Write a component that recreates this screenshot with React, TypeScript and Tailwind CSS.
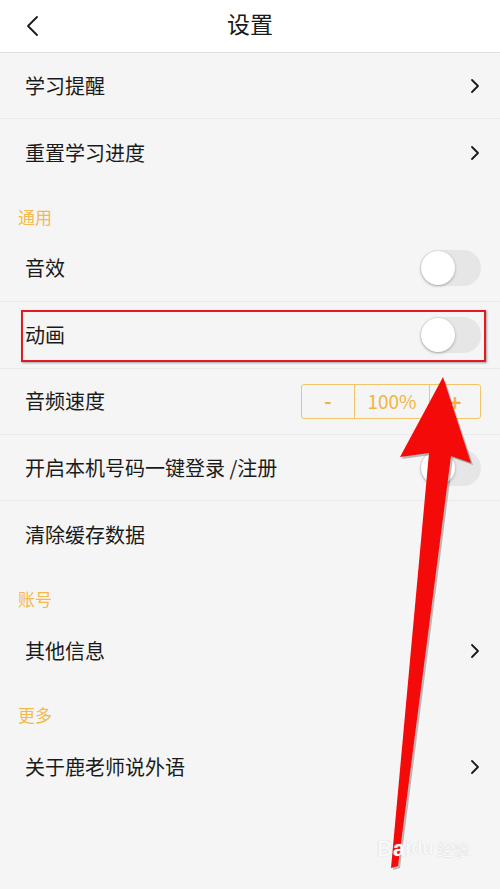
import { ReactNode } from "react";

const FONT = { fontFamily: '"Noto Sans CJK SC", "Noto Sans", sans-serif' };

function Chevron() {
  return (
    <svg width="12" height="18" viewBox="0 0 12 18" fill="none">
      <path d="M3 3l6 6-6 6" stroke="#1a1a1a" strokeWidth="1.8" strokeLinecap="round" strokeLinejoin="round" />
    </svg>
  );
}

function Toggle() {
  return (
    <div className="relative h-[36px] w-[61px] rounded-full bg-[#e6e6e6]">
      <div className="absolute left-[1px] top-[1px] h-[34px] w-[34px] rounded-full bg-white shadow-[0_1px_3px_rgba(0,0,0,0.3)]" />
    </div>
  );
}

function Stepper() {
  return (
    <div className="flex h-[35px] w-[180px] rounded-[3px] border border-[#f3c46a] text-[#f2b440]">
      <div className="flex w-[53px] items-center justify-center border-r border-[#f3c46a] text-[20px] font-bold">-</div>
      <div className="flex w-[75px] items-center justify-center border-r border-[#f3c46a] text-[19px]">100%</div>
      <div className="flex flex-1 items-center justify-center text-[22px] font-bold">+</div>
    </div>
  );
}

function Row({ label, right, last, children }: { label: string; right?: ReactNode; last?: boolean; children?: ReactNode }) {
  return (
    <div className={`relative flex h-[66.4px] items-center justify-between pl-[25px] pr-[19px] ${last ? "" : "border-b border-[#e9e9e9]"}`}>
      <span className="text-[20px] text-[#1a1a1a]">{label}</span>
      {right}
      {children}
    </div>
  );
}

function Section({ title }: { title: string }) {
  return (
    <div className="flex h-[50px] items-end pb-[9px] pl-[18px] text-[17px] leading-[20px] text-[#f4b94a]">{title}</div>
  );
}

export default function App() {
  return (
    <div className="relative h-[889px] w-[500px] overflow-hidden bg-[#f5f5f5]" style={FONT}>
      <header className="relative flex h-[53px] items-center justify-center border-b border-[#dedede] bg-white pb-[5px]">
        <svg className="absolute left-[25px] top-[15px]" width="16" height="22" viewBox="0 0 16 22" fill="none">
          <path d="M12 2L3 11l9 9" stroke="#1a1a1a" strokeWidth="1.8" strokeLinecap="round" strokeLinejoin="round" />
        </svg>
        <h1 className="text-[23px] text-[#1a1a1a]">设置</h1>
      </header>

      <Row label="学习提醒" right={<Chevron />} />
      <Row label="重置学习进度" right={<Chevron />} last />

      <Section title="通用" />
      <Row label="音效" right={<Toggle />} />
      <Row label="动画" right={<Toggle />}>
        <div className="absolute left-[21px] right-[14px] top-[8px] h-[52px] border-2 border-[#e11b22] shadow-[1px_1px_2px_rgba(0,0,0,0.35)]" />
      </Row>
      <Row label="音频速度" right={<Stepper />} />
      <Row label="开启本机号码一键登录 /注册" right={<Toggle />} />
      <Row label="清除缓存数据" last />

      <Section title="账号" />
      <Row label="其他信息" right={<Chevron />} last />

      <Section title="更多" />
      <Row label="关于鹿老师说外语" right={<Chevron />} last />

      <svg className="pointer-events-none absolute left-0 top-0" width="500" height="889" viewBox="0 0 500 889">
        <polygon
          points="445,380 473,465 453,458 400,868 393,870 431,455 402,459"
          fill="#000"
          opacity="0.25"
        />
        <polygon points="443,377 471,463 451,456 398,866 391,868 429,453 400,457" fill="#f50a0a" />
      </svg>

      <div className="absolute left-[377px] top-[832px] flex items-center text-[22px] font-bold text-white/90" style={{ fontFamily: '"Liberation Sans", sans-serif', textShadow: "0 0 1px #bbb" }}>
        Bai<span className="text-[18px]">du</span>
        <span className="ml-1 text-[16px] font-normal" style={FONT}>经验</span>
      </div>
    </div>
  );
}
